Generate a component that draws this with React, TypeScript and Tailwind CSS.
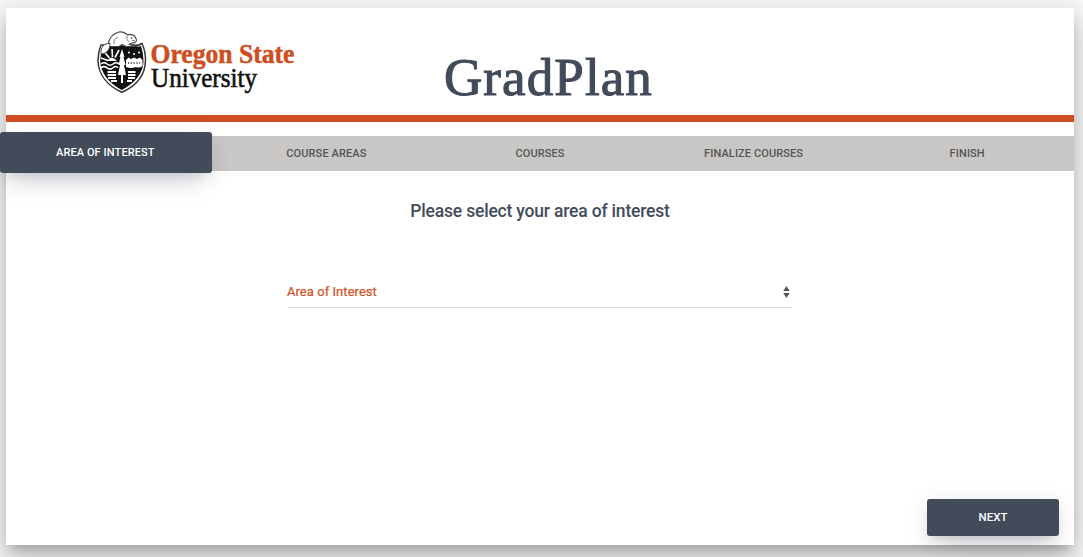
const steps = ['Area of Interest', 'Course Areas', 'Courses', 'Finalize Courses', 'Finish'];

function UniversityLogo() {
  return (
    <svg width="204" height="72" viewBox="94 28 204 72" role="img" aria-label="Oregon State University" className="overflow-visible">
      {/* shield */}
      <path d="M101 45 Q98 52 98 60 C98 75 108 86 121.800 92.300 C136 86 145.500 75 145.500 60 Q145.500 51 142 43.500 Q138 46 134 45 H110 Z" fill="#fff" stroke="#333" strokeWidth="1.500" />
      <path d="M103 48 Q100 54 100.200 61 C100.500 73 109 83 121.800 90 C135 83 143.500 73 143.500 61 Q143.500 53 141 46 Q138 47 134 46 H110 Z" fill="#111" />
      {/* sun and rays */}
      <g stroke="#fff" strokeWidth="1.600" fill="none">
        <path d="M101 58 L108 60.500 M104 51.500 L109.500 58 M112 49 L112.500 57 M119 50 L115 57.500" />
        <path d="M101 64 Q104 61.500 107 64 T113 64 T119 64 M101 67.800 Q104 65.300 107 67.800 T113 67.800 T118 67.800" />
        <path d="M107.500 72 H116 M107.500 75 H116 M108 78 H116 M111 81 H117 M128 72 H135.500 M128 75 H135.500 M128 78 H135 M127 81 H132" strokeWidth="2" />
      </g>
      <path d="M107 61 Q111.500 54 117 61 Z" fill="#fff" />
      <path d="M122 49 L119.500 57 L120.500 57 L118.500 65 L120 65 L118 75 H121 V83 H123 V75 H126 L124 65 L125.500 65 L123.500 57 L124.500 57 Z" fill="#fff" />
      <path d="M126 60 L128.500 57.500 L131 59 L134 57.500 L137 59 L140 57.500 L142.500 60 V66 Q139 68.500 136 67 Q131 69 126 67 Z" fill="#fff" />
      <path d="M128 63 H140" stroke="#666" strokeWidth="2" strokeDasharray="1.200 1.600" />
      <g fill="#fff">
        <circle cx="129" cy="52.500" r="1" />
        <circle cx="134" cy="54" r="1" />
        <circle cx="139" cy="52.500" r="1" />
      </g>
      {/* beaver */}
      <path d="M108 45 C109 38 113 33.500 119 32 C124 31 126 34 128 35 C130 33.500 135 35 136 38.500 C137.500 41 136 43 132 43 L129 44.500 L137 46.500 H126 L122 44.500 L119 46.500 H109 Z" fill="#fff" stroke="#444" strokeWidth="1.100" strokeLinejoin="round" />
      <path d="M110 43.500 C104 43 100.500 47 101 54 C106 54 110 50 110 43.500 Z" fill="#fff" stroke="#333" strokeWidth=".9" />
      <path d="M114 44 Q113 39 118 37 M127 36 Q126 40 129 42 M132 40.500 H135" fill="none" stroke="#666" strokeWidth=".8" />
      <circle cx="131.500" cy="38" r=".8" fill="#222" />
      <text x="150.500" y="62.800" textLength="144" lengthAdjust="spacingAndGlyphs" stroke="#ce4e22" strokeWidth=".5" className="fill-[#ce4e22] font-['Liberation_Serif',serif] text-[27px] font-bold">Oregon State</text>
      <text x="151" y="87" textLength="106" lengthAdjust="spacingAndGlyphs" stroke="#111" strokeWidth=".6" className="fill-[#111] font-['Liberation_Serif',serif] text-[27px]">University</text>
    </svg>
  );
}

export default function App() {
  return (
    <div className="h-[557px] w-[1083px] overflow-hidden bg-[#fafafa] pt-2 pl-1.5 font-[Roboto,sans-serif] text-[#424b5a]">
      <main className="flex h-[537px] w-[1068px] flex-col bg-white shadow-[0_16px_24px_2px_rgba(0,0,0,0.14),0_6px_30px_5px_rgba(0,0,0,0.12),0_8px_10px_-5px_rgba(0,0,0,0.2)]">
        <header className="grid h-[114px] shrink-0 grid-cols-[438px_1fr] border-b-[7px] border-[#ce4e22]">
          <div className="pt-5 pl-[88px]">
            <UniversityLogo />
          </div>
          <h1 className="pt-[39px] font-['Liberation_Serif',serif] text-[53px] leading-[60px] tracking-[1.1px] [-webkit-text-stroke:1.1px_#424b5a]">GradPlan</h1>
        </header>

        <nav className="mt-[14px] h-[35px] shrink-0 bg-[#c8c7c5]">
          <ol className="grid h-full grid-cols-5 text-[11px] font-medium tracking-[0.1px] uppercase">
            {steps.map((step, i) =>
              i === 0 ? (
                <li key={step} className="z-10 -mt-1 -ml-1.5 mr-[8px] flex h-[41px] items-center justify-center rounded-[3px] bg-[#424b5a] pt-px pr-px text-white shadow-[0_16px_26px_-10px_rgba(66,75,90,0.25),0_4px_25px_0_rgba(0,0,0,0.06),0_8px_10px_-5px_rgba(66,75,90,0.12)]">{step}</li>
              ) : (
                <li key={step} className="flex items-center justify-center text-[#555]">{step}</li>
              )
            )}
          </ol>
        </nav>

        <section className="flex flex-1 flex-col items-center">
          <h2 className="mt-[28px] text-[17.5px] leading-6 font-medium tracking-[-0.19px]">Please select your area of interest</h2>
          <button className="mt-[33px] flex h-[52px] w-[504px] items-center justify-between border-b border-[#dedede] pt-[20px] text-[13px] tracking-[0.05px] text-[#ce4e22] [-webkit-text-stroke:0.2px_#ce4e22]">
            <span className="-ml-px">Area of Interest</span>
            <svg width="7" height="12" viewBox="0 0 7 12" className="mr-[2px] fill-[#555]">
              <path d="M3.500 0 L6.700 5 H.3 Z M.3 7 H6.700 L3.500 12 Z" />
            </svg>
          </button>
        </section>

        <footer className="flex justify-end pr-[15px] pb-[9px]">
          <button className="h-[37px] w-[132px] rounded-[3px] bg-[#424b5a] text-[11.5px] font-medium text-white shadow-[0_14px_26px_-12px_rgba(66,75,90,0.3),0_4px_23px_0_rgba(0,0,0,0.1),0_8px_10px_-5px_rgba(66,75,90,0.15)]">NEXT</button>
        </footer>
      </main>
    </div>
  );
}
